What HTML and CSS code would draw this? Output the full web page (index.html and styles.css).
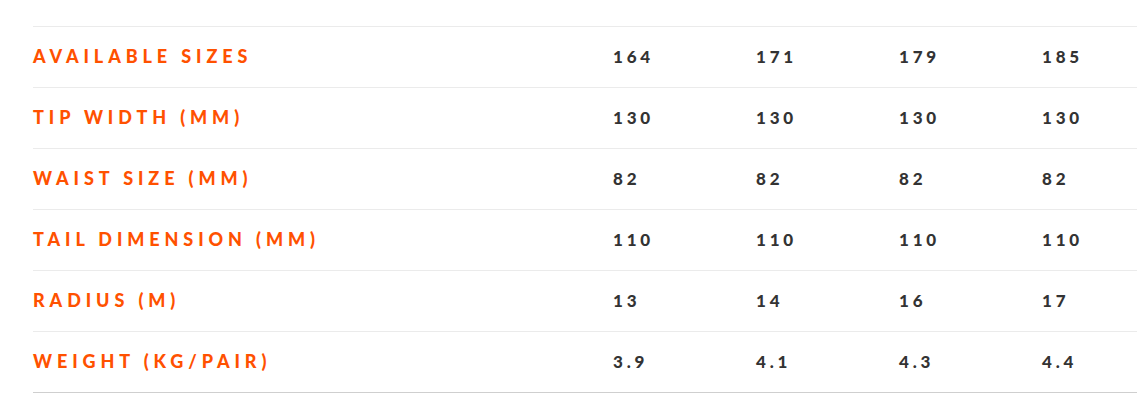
FILE: index.html
```html
<!DOCTYPE html>
<html>
<head>
<meta charset="utf-8">
<link rel="stylesheet" href="styles.css">
</head>
<body>
<div class="specs">
  <div class="row"><div class="label">Available Sizes</div><div class="val">164</div><div class="val">171</div><div class="val">179</div><div class="val">185</div></div>
  <div class="row"><div class="label">Tip Width (mm)</div><div class="val">130</div><div class="val">130</div><div class="val">130</div><div class="val">130</div></div>
  <div class="row"><div class="label">Waist Size (mm)</div><div class="val">82</div><div class="val">82</div><div class="val">82</div><div class="val">82</div></div>
  <div class="row"><div class="label">Tail Dimension (mm)</div><div class="val">110</div><div class="val">110</div><div class="val">110</div><div class="val">110</div></div>
  <div class="row"><div class="label">Radius (m)</div><div class="val">13</div><div class="val">14</div><div class="val">16</div><div class="val">17</div></div>
  <div class="row last"><div class="label">Weight (kg/pair)</div><div class="val">3.9</div><div class="val">4.1</div><div class="val">4.3</div><div class="val">4.4</div></div>
</div>
</body>
</html>
```
FILE: styles.css
```css
html, body {
  margin: 0;
  padding: 0;
  background: #fff;
  overflow: hidden;
}
.specs {
  padding: 26px 0 0 33px;
}
.row {
  display: grid;
  grid-template-columns: 580px 143px 143px 143px 143px;
  align-items: center;
  height: 60px;
  border-top: 1px solid #ebebeb;
  padding-bottom: 0;
  box-sizing: content-box;
}
.row.last {
  border-bottom: 1px solid #cfcfcf;
}
.label {
  font-family: Lato, "Liberation Sans", sans-serif;
  font-weight: 900;
  font-size: 18px;
  letter-spacing: 4.9px;
  text-transform: uppercase;
  color: #ff5100;
  margin-top: -2px;
}
.val {
  font-family: Lato, "Liberation Sans", sans-serif;
  font-weight: 900;
  font-size: 17px;
  letter-spacing: 3.8px;
  color: #333;
  margin-top: -2px;
}
```
